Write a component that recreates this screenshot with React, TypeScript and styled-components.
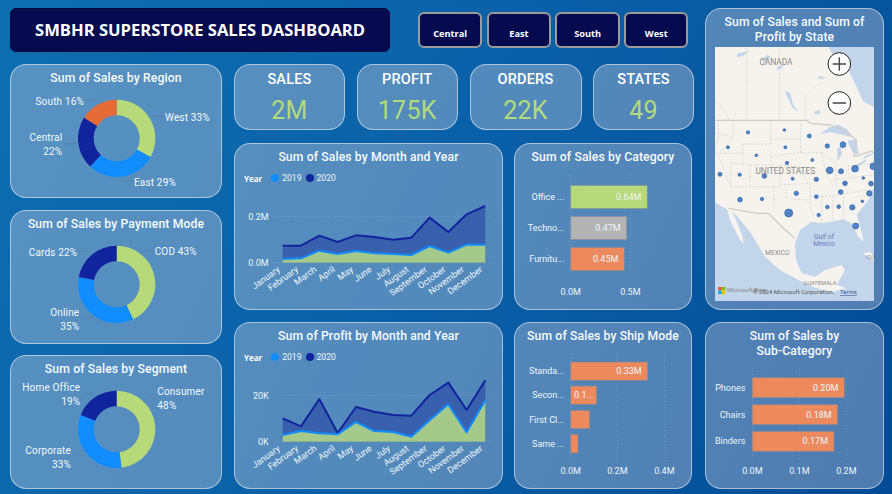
import React from "react";
import styled, { createGlobalStyle } from "styled-components";

const Global = createGlobalStyle`
  html, body { margin: 0; padding: 0; background: #0a5ba5; }
  * { box-sizing: border-box; }
`;
const din = `Roboto, "Noto Sans", sans-serif`;
const seg = `"Open Sans", "Noto Sans", sans-serif`;
const glass = "rgba(255, 236, 234, 0.3)";

const Page = styled.div`
  width: 892px; height: 494px; overflow: hidden; display: flex; gap: 11px;
  padding: 8px 8px 5px 10px;
  background: linear-gradient(115deg, #0e6db1 0%, #0a60a8 50%, #034b96 100%);
  font-family: ${din};
`;
const Main = styled.div`width: 684px; display: flex; flex-direction: column; gap: 12px;`;
const Side = styled.div`width: 179px; display: flex; flex-direction: column; gap: 12px;`;
const Header = styled.div`height: 44px; display: flex; align-items: flex-start; gap: 28px;`;
const TitleBar = styled.div`
  width: 380px; height: 44px; background: #060b50; border: 1px solid #04083a; border-radius: 6px;
  color: #fff; font: 700 16.6px ${seg}; display: flex; align-items: center; padding-left: 24px; padding-bottom: 1px;
`;
const Filters = styled.div`display: flex; gap: 4.3px; margin-top: 4px;`;
const Filter = styled.div`
  width: 64.4px; height: 36px; background: #060b50; border: 2px solid #9c9a9a; border-radius: 6px;
  color: #fff; font: 700 9.2px ${seg}; display: flex; justify-content: center; align-items: flex-end; padding-bottom: 6px;
`;
const Body = styled.div`display: flex; gap: 12px;`;
const LeftCol = styled.div`width: 212px; display: flex; flex-direction: column; gap: 11.5px;`;
const MidCol = styled.div`width: 460px; display: flex; flex-direction: column; gap: 13px;`;
const KpiRow = styled.div`display: flex; gap: 11.5px;`;
const ChartGrid = styled.div`display: grid; grid-template-columns: 269px 178px; grid-auto-rows: 167px; gap: 12px 11px;`;
const Card = styled.div<{ $w?: number; $h: number }>`
  width: ${(p) => (p.$w ? `${p.$w}px` : "100%")}; height: ${(p) => p.$h}px;
  background: ${glass}; border: 1px solid rgba(255, 255, 255, 0.5); border-radius: 16px;
  overflow: hidden; display: flex; flex-direction: column;
`;
const Heading = styled.div`
  padding-top: 6px; margin-bottom: -1px; font-size: 12.2px; line-height: 15.2px; letter-spacing: 0.12px; font-weight: 500;
  color: #f7fbff; text-align: center;
`;
const Kpi = styled.div<{ $w: number }>`
  width: ${(p) => p.$w}px; height: 66px; background: ${glass}; border: 1px solid rgba(255, 255, 255, 0.5);
  border-radius: 16px; display: flex; flex-direction: column; align-items: center;
`;
const KpiLabel = styled.div`font-size: 14.5px; line-height: 18px; margin-top: 5.5px; letter-spacing: 0.2px; color: #fff; font-weight: 500;`;
const KpiValue = styled.div`font-size: 25px; line-height: 30px; margin-top: 7px; letter-spacing: 0.3px; color: #b4da7a;`;
const Legend = styled.div`
  margin: 8px 0 0 9px; height: 12px; display: flex; align-items: center; gap: 3px; color: #eef5fb; font-size: 8.6px;
`;
const LegendKey = styled.span`font: 700 8px ${seg}; color: #fff; margin-right: 5px;`;
const Dot = styled.span<{ $c: string }>`width: 8px; height: 8px; border-radius: 50%; background: ${(p) => p.$c}; margin-left: 1px;`;
const MapBox = styled.div`margin: 3px 0 0 9px; width: 159px; height: 254px; overflow: hidden;`;
const Label = styled.text`font-family: ${din}; font-size: 30px; fill: #f3f8fd; letter-spacing: 0.5px;`;
const Axis = styled.text`font-family: ${din}; font-size: 27px; fill: #eef5fb;`;
const MapText = styled.text<{ $c?: string; $s?: number }>`
  font-family: ${din}; font-size: ${(p) => p.$s ?? 24}px; fill: ${(p) => p.$c ?? "#8a8784"};
`;

function Plot({ left, top, w, h, head, children }: { left: number; top: number; w: number; h: number; head: number; children: React.ReactNode }) {
  const iw = w - 2, ih = h - 2 - head;
  return (
    <svg width={iw} height={ih} viewBox={`${left + 3} ${top + 3 + head * 3} ${iw * 3} ${ih * 3}`} style={{ display: "block", flex: "none" }}>
      {children}
    </svg>
  );
}

const GREEN = "#b7d97a", BLUE = "#118dff", NAVY = "#12239e", ORANGE = "#e66c37";

function arc(cx: number, cy: number, R: number, r: number, a0: number, a1: number) {
  const p = (rad: number, a: number) => `${(cx + rad * Math.sin(a)).toFixed(2)} ${(cy - rad * Math.cos(a)).toFixed(2)}`;
  const large = a1 - a0 > Math.PI ? 1 : 0;
  return `M${p(R, a0)} A${R} ${R} 0 ${large} 1 ${p(R, a1)} L${p(r, a1)} A${r} ${r} 0 ${large} 0 ${p(r, a0)} Z`;
}

type Txt = [string, number, number, "start" | "end"];
function Donut({ title, top, cy, parts, labels, leaders }: { title: string; top: number; cy: number; parts: [number, string][]; labels: Txt[]; leaders: string[] }) {
  let acc = 0;
  return (
    <Card $h={134}>
      <Heading>{title}</Heading>
      <Plot left={30} top={top} w={212} h={134} head={20}>
        {parts.map(([v, c], i) => {
          const a0 = (acc / 100) * 2 * Math.PI;
          acc += v;
          const a1 = (acc / 100) * 2 * Math.PI;
          return <path key={i} d={arc(350, cy, 116, 69, a0, a1)} fill={c} />;
        })}
        {leaders.map((d, i) => <polyline key={i} points={d} fill="none" stroke="#5e7f9f" strokeWidth={2} />)}
        {labels.map(([t, x, y, a], i) => <Label key={i} x={x} y={y} textAnchor={a}>{t}</Label>)}
      </Plot>
    </Card>
  );
}

const MONTHS = ["January", "February", "March", "April", "May", "June", "July", "August", "September", "October", "November", "December"];
const XS = [158, 213, 268, 323, 378, 433, 489, 544, 599, 655, 710, 766];

function Trend({ title, top, base, grid, gridLabel, baseLabel, a, b }: { title: string; top: number; base: number; grid: number; gridLabel: string; baseLabel: string; a: number[]; b: number[] }) {
  const line = (v: number[]) => v.map((y, i) => `${XS[i]},${y}`).join(" ");
  const area = (v: number[]) => `${XS[0]},${base} ${line(v)} ${XS[11]},${base}`;
  return (
    <Card $h={167}>
      <Heading>{title}</Heading>
      <Legend>
        <LegendKey>Year</LegendKey><Dot $c={BLUE} />2019<Dot $c={NAVY} />2020
      </Legend>
      <Plot left={12} top={top} w={269} h={167} head={40}>
        <line x1={135} x2={792} y1={grid} y2={grid} stroke="#fff" strokeOpacity={0.4} strokeWidth={2} strokeDasharray="2 8" />
        <line x1={135} x2={792} y1={base} y2={base} stroke="#fff" strokeOpacity={0.4} strokeWidth={2} strokeDasharray="2 8" />
        <polygon points={area(b)} fill="#3860ad" />
        <polygon points={area(a)} fill="#a4c98a" />
        <polyline points={line(b)} fill="none" stroke={NAVY} strokeWidth={6} strokeLinejoin="round" />
        <polyline points={line(a)} fill="none" stroke={BLUE} strokeWidth={6} strokeLinejoin="round" />
        <Axis x={116} y={grid + 10} textAnchor="end">{gridLabel}</Axis>
        <Axis x={116} y={base + 10} textAnchor="end">{baseLabel}</Axis>
        {MONTHS.map((m, i) => (
          <Axis key={m} textAnchor="end" transform={`translate(${XS[i] - 6},${base + 24}) rotate(-36)`}>{m}</Axis>
        ))}
      </Plot>
    </Card>
  );
}

type Bar = { name: string; y0: number; y1: number; end: number; c: string; val?: string; valStart?: boolean };
function Bars({ title, left, top, w, head, x0, gridTop, gridBottom, ticks, labelX, axisY, bars }: { title: React.ReactNode; left: number; top: number; w: number; head: number; x0: number; gridTop: number; gridBottom: number; ticks: [number, string][]; labelX: number; axisY: number; bars: Bar[] }) {
  return (
    <Card $w={w} $h={167}>
      <Heading>{title}</Heading>
      <Plot left={left} top={top} w={w} h={167} head={head}>
        {ticks.map(([x]) => (
          <line key={x} x1={x} x2={x} y1={gridTop} y2={gridBottom} stroke="#fff" strokeOpacity={0.45} strokeWidth={2} strokeDasharray="2 8" />
        ))}
        {bars.map((b) => (
          <g key={b.name}>
            <rect x={x0} y={b.y0} width={b.end - x0} height={b.y1 - b.y0} fill={b.c} stroke="#80899f" strokeOpacity={0.8} strokeWidth={2.5} />
            <Axis x={labelX} y={(b.y0 + b.y1) / 2 + 9} textAnchor="end">{b.name}</Axis>
            {b.val && <Axis x={b.valStart ? x0 + 10 : b.end - 18} y={(b.y0 + b.y1) / 2 + 9} textAnchor={b.valStart ? "start" : "end"}>{b.val}</Axis>}
          </g>
        ))}
        {ticks.map(([x, t]) => <Axis key={t} x={x} y={axisY} textAnchor="middle">{t}</Axis>)}
      </Plot>
    </Card>
  );
}

const BUBBLES = [[144,277,5],[253,270,4],[328,288,6],[84,322,4.5],[256,322,4.5],[382,318,6.5],[429,314,8.5],[169,346,4],[261,369,5],[337,360,4.5],[389,391,10],[423,394,7.5],[465,386,10],[520,379,10],[60,403,6],[119,404,5],[193,408,7],[278,416,4.5],[349,418,6.5],[490,414,4],[435,430,7],[513,431,7],[422,456,7],[289,460,6.5],[349,470,5.5],[508,460,8],[120,479,7],[186,477,5],[382,501,5.5],[416,500,5.5],[457,502,8],[487,484,4],[266,519,12],[356,525,5],[467,558,9]];
const BORDERS = [
  "140,21 140,241", "238,21 238,241", "316,241 316,170 390,100", "45,180 70,205 88,241",
  "55,241 55,300 45,320", "45,278 100,290", "100,241 100,290 60,340 45,340", "60,340 130,340",
  "212,241 212,312", "212,298 302,298", "128,312 212,312", "128,312 128,375", "92,368 92,440",
  "55,345 92,440", "92,368 150,375", "150,375 150,440", "92,440 240,440", "150,375 212,375", "212,348 302,338",
  "212,348 212,375 298,380", "302,241 302,338", "302,338 365,338", "365,338 375,390 400,440", "298,380 325,430",
  "240,380 240,440", "240,435 325,430", "258,445 258,475 325,480", "222,440 222,510", "330,430 330,500 340,525",
  "330,470 400,468 500,450", "400,468 397,540", "365,468 365,548", "430,468 430,535", "400,420 515,405",
  "445,375 445,410", "405,368 410,440", "490,375 522,370", "480,470 520,470", "365,338 405,368"
];

function MapArt() {
  return (
    <svg width={159} height={254} viewBox="45 21 477 762" style={{ display: "block" }}>
      <rect x={45} y={21} width={477} height={762} fill="#f6f3ef" />
      <g fill="#c3d5ea">
        <path d="M385,21 L400,45 L440,80 L470,140 L490,185 L522,200 L522,21 Z" />
        <path d="M45,486 L82,510 L92,545 L118,595 L130,612 L128,590 L112,550 L97,512 L150,575 L195,650 L240,690 L300,722 L350,745 L400,755 L440,745 L470,770 L522,775 L522,783 L45,783 Z" />
        <path d="M522,440 L505,480 L470,525 L480,560 L492,605 L475,590 L455,550 L430,538 L395,545 L365,550 L335,545 L300,570 L285,610 L288,660 L305,700 L345,710 L375,690 L425,675 L435,690 L410,735 L440,745 L470,770 L522,775 Z" />
        <path d="M360,283 L385,264 L415,254 L442,268 L458,292 L420,283 L390,276 Z" />
        <path d="M412,325 L423,320 L425,345 L413,364 Z" />
        <path d="M442,302 L468,298 L476,342 L462,342 L450,322 Z" />
        <path d="M464,378 L498,358 L500,362 L472,382 Z" />
        <path d="M490,350 L515,340 L522,334 L522,340 L495,356 Z" />
        <path d="M255,152 L270,158 L280,195 L296,215 L278,203 L264,178 Z" />
        <path d="M342,215 L358,210 L362,220 L346,224 Z" />
        <path d="M352,112 L368,108 L370,116 L356,116 Z" />
        <path d="M110,42 L150,32 L128,48 L112,52 Z" />
        <path d="M185,62 L202,44 L212,50 L194,68 Z" />
        <path d="M228,85 L246,74 L250,80 L236,90 Z" />
      </g>
      <path d="M490,640 L510,636 L522,650 L522,662 L505,650 Z" fill="#f6f3ef" />
      <polyline points="45,241 320,241 332,250 390,255 430,270 470,300 462,350 520,332" fill="none" stroke="#d0ccc7" strokeWidth={4} />
      <polyline points="85,505 170,520 205,520 250,565 285,595" fill="none" stroke="#d0ccc7" strokeWidth={4} />
      <g fill="none" stroke="#c9c6c2" strokeWidth={1.6} strokeDasharray="7 4">
        {BORDERS.map((p) => <polyline key={p} points={p} />)}
      </g>
      <MapText x={228} y={74} $s={25} textAnchor="middle">CANADA</MapText>
      <MapText x={256} y={401} $s={25} textAnchor="middle">UNITED STATES</MapText>
      <MapText x={232} y={646} $s={20} textAnchor="middle">MEXICO</MapText>
      <MapText x={372} y={596} $s={20} $c="#5f7fbb" textAnchor="middle">Gulf of</MapText>
      <MapText x={372} y={619} $s={20} $c="#5f7fbb" textAnchor="middle">Mexico</MapText>
      <MapText x={360} y={734} $s={17} textAnchor="middle">GUATEMALA</MapText>
      <MapText x={500} y={656} $s={17}>CU</MapText>
      {BUBBLES.map(([x, y, r], i) => <circle key={i} cx={x} cy={y} r={r} fill="#4f84c8" stroke="#2a5aa5" strokeWidth={2} />)}
      <g stroke="#222" strokeWidth={3} fill="#fff">
        <circle cx={418} cy={72} r={34} />
        <circle cx={418} cy={189} r={34} />
        <path d="M398,72 H438 M418,52 V92 M398,189 H438" fill="none" strokeWidth={4} stroke="#444" />
      </g>
      <rect x={55} y={741} width={10} height={10} fill="#f25022" />
      <rect x={66} y={741} width={10} height={10} fill="#7fba00" />
      <rect x={55} y={752} width={10} height={10} fill="#00a4ef" />
      <rect x={66} y={752} width={10} height={10} fill="#ffb900" />
      <MapText x={81} y={757} $s={18}>Microsoft Bing</MapText>
      <MapText x={158} y={762} $s={18} $c="#555">© 2024 Microsoft Corporation, </MapText>
      <MapText x={420} y={762} $s={18} $c="#3c5aa0" textDecoration="underline">Terms</MapText>
    </svg>
  );
}

export default function App() {
  const OR = "#ec8a5e";
  return (
    <Page>
      <Global />
      <Main>
        <Header>
          <TitleBar>SMBHR SUPERSTORE SALES DASHBOARD</TitleBar>
          <Filters>
            {["Central", "East", "South", "West"].map((f) => <Filter key={f}>{f}</Filter>)}
          </Filters>
        </Header>
        <Body>
          <LeftCol>
            <Donut title="Sum of Sales by Region" top={192} cy={415}
              parts={[[33, GREEN], [29, BLUE], [22, NAVY], [16, ORANGE]]}
              labels={[["South 16%", 252, 314, "end"], ["West 33%", 495, 363, "start"], ["Central", 187, 423, "end"], ["22%", 187, 464, "end"], ["East 29%", 402, 558, "start"]]}
              leaders={["256,300 285,300 292,310", "490,350 458,350 450,358", "192,431 236,431", "397,543 368,543 364,530"]} />
            <Donut title="Sum of Sales by Payment Mode" top={15} cy={238}
              parts={[[43, GREEN], [35, BLUE], [22, NAVY]]}
              labels={[["Cards 22%", 232, 153, "end"], ["COD 43%", 464, 150, "start"], ["Online", 238, 333, "end"], ["35%", 238, 375, "end"]]}
              leaders={["236,138 268,138 274,146", "458,136 430,136 420,148", "242,341 275,341 280,330"]} />
            <Donut title="Sum of Sales by Segment" top={450} cy={673}
              parts={[[48, GREEN], [33, BLUE], [19, NAVY]]}
              labels={[["Home Office", 241, 558, "end"], ["19%", 241, 600, "end"], ["Consumer", 472, 570, "start"], ["48%", 472, 611, "start"], ["Corporate", 213, 747, "end"], ["33%", 213, 788, "end"]]}
              leaders={["246,566 275,566 282,576", "466,578 440,578 430,590", "218,752 255,752 262,745"]} />
          </LeftCol>
          <MidCol>
            <KpiRow>
              <Kpi $w={111}><KpiLabel>SALES</KpiLabel><KpiValue>2M</KpiValue></Kpi>
              <Kpi $w={101.5}><KpiLabel>PROFIT</KpiLabel><KpiValue>175K</KpiValue></Kpi>
              <Kpi $w={112}><KpiLabel>ORDERS</KpiLabel><KpiValue>22K</KpiValue></Kpi>
              <Kpi $w={101}><KpiLabel>STATES</KpiLabel><KpiValue>49</KpiValue></Kpi>
            </KpiRow>
            <ChartGrid>
              <Trend title="Sum of Sales by Month and Year" top={9} base={368} grid={230} gridLabel="0.2M" baseLabel="0.0M"
                b={[317,317,287,306,286,291,299,293,233,276,223,198]}
                a={[357,355,332,342,333,340,342,345,318,338,314,314]} />
              <Bars title="Sum of Sales by Category" left={12} top={9} w={178} head={20} x0={182} gridTop={105} gridBottom={415}
                ticks={[[182, "0.0M"], [361, "0.5M"]]} labelX={163} axisY={466}
                bars={[
                  { name: "Office ...", y0: 136, y1: 206, end: 412, c: GREEN, val: "0.64M" },
                  { name: "Techno...", y0: 229, y1: 299, end: 350, c: "#b3b3b3", val: "0.47M" },
                  { name: "Furnitu...", y0: 322, y1: 392, end: 343, c: OR, val: "0.45M" },
                ]} />
              <Trend title="Sum of Profit by Month and Year" top={12} base={371} grid={232} gridLabel="20K" baseLabel="0K"
                b={[301,325,243,345,267,281,291,293,231,194,276,187]}
                a={[351,339,346,349,312,339,342,356,307,259,343,247]} />
              <Bars title="Sum of Sales by Ship Mode" left={12} top={12} w={178} head={20} x0={182} gridTop={108} gridBottom={430}
                ticks={[[182, "0.0M"], [322, "0.2M"], [463, "0.4M"]]} labelX={163} axisY={468}
                bars={[
                  { name: "Standa...", y0: 132, y1: 187, end: 413, c: OR, val: "0.33M" },
                  { name: "Secon...", y0: 204, y1: 259, end: 260, c: OR, val: "0.1...", valStart: true },
                  { name: "First Cl...", y0: 277, y1: 332, end: 239, c: OR },
                  { name: "Same ...", y0: 349, y1: 405, end: 204, c: OR },
                ]} />
            </ChartGrid>
          </MidCol>
        </Body>
      </Main>
      <Side>
        <Card $h={302}>
          <Heading>Sum of Sales and Sum of<br />Profit by State</Heading>
          <MapBox><MapArt /></MapBox>
        </Card>
        <Bars title={<>Sum of Sales by<br />Sub-Category</>} left={585} top={12} w={179} head={35} x0={727} gridTop={150} gridBottom={430}
          ticks={[[727, "0.0M"], [868, "0.1M"], [1009, "0.2M"]]} labelX={706} axisY={468}
          bars={[
            { name: "Phones", y0: 179, y1: 239, end: 1003, c: OR, val: "0.20M" },
            { name: "Chairs", y0: 260, y1: 320, end: 983, c: OR, val: "0.18M" },
            { name: "Binders", y0: 340, y1: 400, end: 972, c: OR, val: "0.17M" },
          ]} />
      </Side>
    </Page>
  );
}
